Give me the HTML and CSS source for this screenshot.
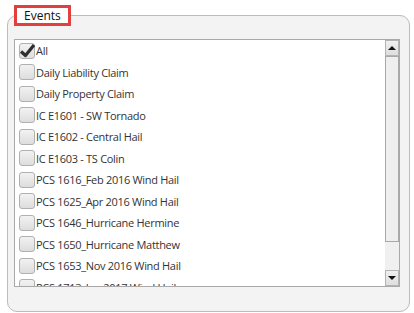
FILE: index.html
```html
<!DOCTYPE html>
<html>
<head>
	<title>Events</title>
	<link rel="stylesheet" href="styles.css">
</head>
<body>

<fieldset class="groupBox">
	<legend class="groupTitle">Events</legend>

	<div class="listBox">
		<div class="listItems">
			<div class="item">
				<span class="check">
					<svg class="tick" width="17" height="15" viewBox="0 0 17 15"><path d="M2 8.5 L6.5 12.5 L15 2" fill="none" stroke="#2e2e2e" stroke-width="3.2" stroke-linejoin="round"/></svg>
				</span>All
			</div>
			<div class="item"><span class="check"></span>Daily Liability Claim</div>
			<div class="item"><span class="check"></span>Daily Property Claim</div>
			<div class="item"><span class="check"></span>IC E1601 - SW Tornado</div>
			<div class="item"><span class="check"></span>IC E1602 - Central Hail</div>
			<div class="item"><span class="check"></span>IC E1603 - TS Colin</div>
			<div class="item"><span class="check"></span>PCS 1616_Feb 2016 Wind Hail</div>
			<div class="item"><span class="check"></span>PCS 1625_Apr 2016 Wind Hail</div>
			<div class="item"><span class="check"></span>PCS 1646_Hurricane Hermine</div>
			<div class="item"><span class="check"></span>PCS 1650_Hurricane Matthew</div>
			<div class="item"><span class="check"></span>PCS 1653_Nov 2016 Wind Hail</div>
			<div class="item"><span class="check"></span>PCS 1713_Jan 2017 Wind Hail</div>
		</div>

		<!-- drawn scrollbar -->
		<div class="scrollBar">
			<div class="scrollButton"><span class="arrowUp"></span></div>
			<div class="scrollThumb"></div>
			<div class="scrollTrack"></div>
			<div class="scrollButton"><span class="arrowDown"></span></div>
		</div>
	</div>
</fieldset>

</body>
</html>
```

FILE: styles.css
```css
body
{
	margin: 0;
	background: #ffffff;
	font-family: "Open Sans", "Noto Sans", sans-serif;
}

.groupBox
{
	margin: 5px 0 0 7px;
	padding: 0 0 24px 0;
	width: 403px;
	box-sizing: border-box;
	border: 1px solid #bcbcbc;
	border-radius: 10px;
	background: #f3f3f3;
}

.groupTitle
{
	margin-left: 6px;
	padding: 0 7px;
	height: 21px;
	box-sizing: border-box;
	border: 3px solid #e2403e;
	background: #ffffff;
	font-size: 12px;
	line-height: 15px;
	color: #111111;
}

.listBox
{
	display: flex;
	flex-direction: row;
	margin: 13px 0 0 6px;
	width: 386px;
	height: 248px;
	box-sizing: border-box;
	border: 1px solid #a9a9a9;
	background: #ffffff;
}

.listItems
{
	flex: 1;
	overflow: hidden;
	padding-left: 4px;
}

.item
{
	display: flex;
	align-items: center;
	height: 21.5px;
	font-size: 11px;
	letter-spacing: -0.3px;
	color: #333333;
	white-space: nowrap;
}

.check
{
	position: relative;
	width: 16px;
	height: 16px;
	margin-right: 1px;
	box-sizing: border-box;
	border: 1px solid #b0b0b0;
	border-radius: 3px;
	background: linear-gradient(#f2f2f2, #dddddd);
	flex-shrink: 0;
}

/* the tick spills over the box edge */
.tick
{
	position: absolute;
	left: -1px;
	top: -1px;
}

.scrollBar
{
	display: flex;
	flex-direction: column;
	width: 14px;
	background: #f0f0f0;
}

.scrollButton
{
	display: flex;
	align-items: center;
	justify-content: center;
	height: 16px;
	box-sizing: border-box;
	border: 1px solid #b4b4b4;
	background: linear-gradient(#efefef, #dedede);
}

.arrowUp
{
	border-left: 4px solid transparent;
	border-right: 4px solid transparent;
	border-bottom: 4px solid #111111;
}

.arrowDown
{
	border-left: 4px solid transparent;
	border-right: 4px solid transparent;
	border-top: 4px solid #111111;
}

.scrollThumb
{
	height: 186px;
	box-sizing: border-box;
	border: 1px solid #a8a8a8;
	background: #efefef;
}

.scrollTrack
{
	flex: 1;
	background: #f0f0f0;
}
```
